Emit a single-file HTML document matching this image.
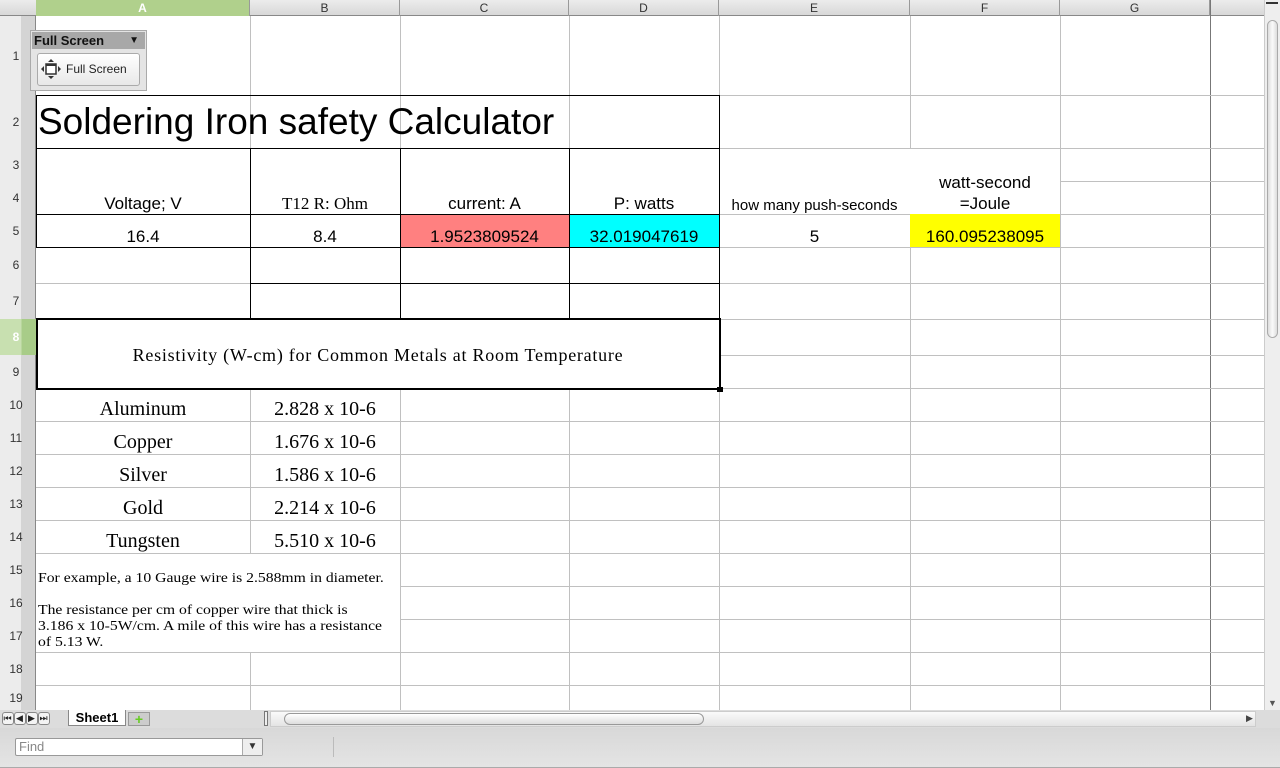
<!DOCTYPE html>
<html><head><meta charset="utf-8"><style>
*{margin:0;padding:0;box-sizing:border-box}
body{width:1280px;height:768px;overflow:hidden;background:#fff;font-family:"Liberation Sans",sans-serif;position:relative}
.a{position:absolute}
.h{position:absolute;height:1px;background:#c0c0c0}
.v{position:absolute;width:1px;background:#c0c0c0}
.t{position:absolute;display:flex;align-items:flex-end;justify-content:center;white-space:nowrap;color:#000}
.ser{font-family:"Liberation Serif",serif}
.rh{position:absolute;left:0;width:36px;font-size:12px;color:#333;display:flex;align-items:center;justify-content:center;padding-right:4px}
.ch{position:absolute;top:0;height:16px;font-size:12px;color:#333;text-align:center;line-height:16px;border-right:1px solid #999}
</style></head><body>
<div class="a" style="left:0;top:0;width:1264px;height:16px;background:linear-gradient(#ececec,#d8d8d8);border-bottom:1px solid #888"></div>
<div class="a" style="left:0;top:16px;width:36px;height:694px;background:linear-gradient(90deg,#ececec 60%,#d4d4d4 60%);border-right:1px solid #888"></div>
<div class="ch" style="left:36px;width:214px;background:#b0d08c;color:#fff;font-weight:bold">A</div>
<div class="ch" style="left:250px;width:150px">B</div>
<div class="ch" style="left:400px;width:169px">C</div>
<div class="ch" style="left:569px;width:150px">D</div>
<div class="ch" style="left:719px;width:191px">E</div>
<div class="ch" style="left:910px;width:150px">F</div>
<div class="ch" style="left:1060px;width:150px">G</div>
<div class="rh" style="top:16px;height:79px">1</div>
<div class="rh" style="top:95px;height:53px">2</div>
<div class="rh" style="top:148px;height:33px">3</div>
<div class="rh" style="top:181px;height:33px">4</div>
<div class="rh" style="top:214px;height:33px">5</div>
<div class="rh" style="top:247px;height:36px">6</div>
<div class="rh" style="top:283px;height:36px">7</div>
<div class="rh" style="top:319px;height:36px;background:linear-gradient(90deg,#c8e0b0 60%,#a8cc88 60%);color:#fff;font-weight:bold">8</div>
<div class="rh" style="top:355px;height:33px">9</div>
<div class="rh" style="top:388px;height:33px">10</div>
<div class="rh" style="top:421px;height:33px">11</div>
<div class="rh" style="top:454px;height:33px">12</div>
<div class="rh" style="top:487px;height:33px">13</div>
<div class="rh" style="top:520px;height:33px">14</div>
<div class="rh" style="top:553px;height:33px">15</div>
<div class="rh" style="top:586px;height:33px">16</div>
<div class="rh" style="top:619px;height:33px">17</div>
<div class="rh" style="top:652px;height:33px">18</div>
<div class="rh" style="top:685px;height:25px">19</div>
<div class="v" style="left:250px;top:16px;height:694px"></div>
<div class="v" style="left:400px;top:16px;height:694px"></div>
<div class="v" style="left:569px;top:16px;height:694px"></div>
<div class="v" style="left:719px;top:16px;height:694px"></div>
<div class="v" style="left:910px;top:16px;height:694px"></div>
<div class="v" style="left:1060px;top:16px;height:694px"></div>
<div class="v" style="left:1210px;top:0;height:710px;background:#777"></div>
<div class="h" style="left:36px;top:95px;width:1228px"></div>
<div class="h" style="left:36px;top:148px;width:1228px"></div>
<div class="h" style="left:36px;top:181px;width:1228px"></div>
<div class="h" style="left:36px;top:214px;width:1228px"></div>
<div class="h" style="left:36px;top:247px;width:1228px"></div>
<div class="h" style="left:36px;top:283px;width:1228px"></div>
<div class="h" style="left:36px;top:319px;width:1228px"></div>
<div class="h" style="left:36px;top:355px;width:1228px"></div>
<div class="h" style="left:36px;top:388px;width:1228px"></div>
<div class="h" style="left:36px;top:421px;width:1228px"></div>
<div class="h" style="left:36px;top:454px;width:1228px"></div>
<div class="h" style="left:36px;top:487px;width:1228px"></div>
<div class="h" style="left:36px;top:520px;width:1228px"></div>
<div class="h" style="left:36px;top:553px;width:1228px"></div>
<div class="h" style="left:400px;top:586px;width:864px"></div>
<div class="h" style="left:400px;top:619px;width:864px"></div>
<div class="h" style="left:36px;top:652px;width:1228px"></div>
<div class="h" style="left:36px;top:685px;width:1228px"></div>
<div class="a" style="left:37px;top:149px;width:682px;height:65px;background:#fff"></div>
<div class="a" style="left:720px;top:149px;width:340px;height:65px;background:#fff"></div>
<div class="a" style="left:37px;top:320px;width:682px;height:68px;background:#fff"></div>
<div class="a" style="left:37px;top:554px;width:363px;height:98px;background:#fff"></div>
<div class="a" style="left:37px;top:16px;width:213px;height:79px;background:#fff"></div>
<div class="a" style="left:400px;top:214px;width:169px;height:33px;background:#ff8080"></div>
<div class="a" style="left:569px;top:214px;width:150px;height:33px;background:#00ffff"></div>
<div class="a" style="left:910px;top:214px;width:150px;height:33px;background:#ffff00"></div>
<div class="a" style="left:36px;top:95px;width:684px;height:54px;border:1px solid #000"></div>
<div class="a" style="left:36px;top:148px;width:684px;height:100px;border:1px solid #000"></div>
<div class="a" style="left:36px;top:214px;width:684px;height:1px;background:#000"></div>
<div class="a" style="left:250px;top:148px;width:1px;height:171px;background:#000"></div>
<div class="a" style="left:400px;top:148px;width:1px;height:171px;background:#000"></div>
<div class="a" style="left:569px;top:148px;width:1px;height:171px;background:#000"></div>
<div class="a" style="left:719px;top:148px;width:1px;height:171px;background:#000"></div>
<div class="a" style="left:250px;top:283px;width:470px;height:1px;background:#000"></div>
<div class="a" style="left:36px;top:318px;width:685px;height:72px;border:2px solid #000"></div>
<div class="a" style="left:717px;top:387px;width:6px;height:5px;background:#000"></div>
<div class="t" style="left:38px;top:95px;width:680px;height:53px;justify-content:flex-start;font-size:37px;padding-bottom:5px">Soldering Iron safety Calculator</div>
<div class="t" style="left:36px;top:148px;width:214px;height:66px;font-size:17px;padding-bottom:0">Voltage; V</div>
<div class="t ser" style="left:250px;top:148px;width:150px;height:66px;font-size:17px;padding-bottom:0">T12 R: Ohm</div>
<div class="t" style="left:400px;top:148px;width:169px;height:66px;font-size:17px;padding-bottom:0">current: A</div>
<div class="t" style="left:569px;top:148px;width:150px;height:66px;font-size:17px;padding-bottom:0">P: watts</div>
<div class="t" style="left:719px;top:148px;width:191px;height:66px;font-size:15px;padding-bottom:0">how many push-seconds</div>
<div class="t" style="left:910px;top:148px;width:150px;height:66px;font-size:17px;line-height:21px;text-align:center;padding-bottom:0">watt-second<br>=Joule</div>
<div class="t" style="left:36px;top:214px;width:214px;height:33px;font-size:17px;padding-bottom:0">16.4</div>
<div class="t" style="left:250px;top:214px;width:150px;height:33px;font-size:17px;padding-bottom:0">8.4</div>
<div class="t" style="left:400px;top:214px;width:169px;height:33px;font-size:17px;padding-bottom:0">1.9523809524</div>
<div class="t" style="left:569px;top:214px;width:150px;height:33px;font-size:17px;padding-bottom:0">32.019047619</div>
<div class="t" style="left:719px;top:214px;width:191px;height:33px;font-size:17px;padding-bottom:0">5</div>
<div class="t" style="left:910px;top:214px;width:150px;height:33px;font-size:17px;padding-bottom:0">160.095238095</div>
<div class="t ser" style="left:36px;top:321px;width:684px;height:69px;align-items:center;font-size:18px;letter-spacing:0.75px">Resistivity (W-cm) for Common Metals at Room Temperature</div>
<div class="t ser" style="left:36px;top:388px;width:214px;height:33px;font-size:20px">Aluminum</div>
<div class="t ser" style="left:250px;top:388px;width:150px;height:33px;font-size:20px">2.828 x 10-6</div>
<div class="t ser" style="left:36px;top:421px;width:214px;height:33px;font-size:20px">Copper</div>
<div class="t ser" style="left:250px;top:421px;width:150px;height:33px;font-size:20px">1.676 x 10-6</div>
<div class="t ser" style="left:36px;top:454px;width:214px;height:33px;font-size:20px">Silver</div>
<div class="t ser" style="left:250px;top:454px;width:150px;height:33px;font-size:20px">1.586 x 10-6</div>
<div class="t ser" style="left:36px;top:487px;width:214px;height:33px;font-size:20px">Gold</div>
<div class="t ser" style="left:250px;top:487px;width:150px;height:33px;font-size:20px">2.214 x 10-6</div>
<div class="t ser" style="left:36px;top:520px;width:214px;height:33px;font-size:20px">Tungsten</div>
<div class="t ser" style="left:250px;top:520px;width:150px;height:33px;font-size:20px">5.510 x 10-6</div>
<div class="a ser" style="left:38px;top:571px;width:360px;font-size:14px;line-height:16px;white-space:nowrap;transform:scaleX(1.12);transform-origin:left top">For example, a 10 Gauge wire is 2.588mm in diameter.<br><br>The resistance per cm of copper wire that thick is<br>3.186 x 10-5W/cm. A mile of this wire has a resistance<br>of 5.13 W.</div>
<div class="a" style="left:30px;top:30px;width:117px;height:61px;background:#e4e4e4;border:1px solid #aaa"></div>
<div class="a" style="left:32px;top:32px;width:113px;height:17px;background:#a8a8a8;font-size:13px;font-weight:bold;color:#111;line-height:17px;padding-left:2px">Full Screen<span style="position:absolute;right:6px;top:0;font-size:10px">▼</span></div>
<div class="a" style="left:37px;top:53px;width:103px;height:33px;background:linear-gradient(#fff,#e8e8e8);border:1px solid #aaa;border-radius:3px;font-size:12px;color:#222;line-height:31px;padding-left:28px">Full Screen</div>
<svg class="a" style="left:40px;top:58px" width="22" height="22" viewBox="0 0 22 22"><rect x="6" y="6" width="10" height="10" fill="#fff" stroke="#333" stroke-width="1.5"/><rect x="6" y="6" width="10" height="2" fill="#333"/><path d="M11 1l-3 3h6zM11 21l-3-3h6zM1 11l3-3v6zM21 11l-3-3v6z" fill="#333"/></svg>
<div class="a" style="left:1264px;top:0;width:16px;height:710px;background:#eee;border-left:1px solid #ccc"></div>
<div class="a" style="left:1266px;top:2px;width:12px;height:2px;background:#333"></div>
<div class="a" style="left:1267px;top:20px;width:11px;height:318px;background:linear-gradient(90deg,#ddd,#fafafa,#ddd);border:1px solid #aaa;border-radius:6px"></div>
<div class="a" style="left:1268px;top:698px;font-size:9px;color:#555">▼</div>
<div class="a" style="left:0;top:710px;width:1280px;height:18px;background:#dcdcdc"></div>
<div class="a" style="left:2px;top:712px;font-size:9px;letter-spacing:1px;color:#222">
<span style="display:inline-block;width:12px;height:13px;border:1px solid #888;border-radius:3px;background:#f4f4f4;text-align:center">⏮</span><span style="display:inline-block;width:12px;height:13px;border:1px solid #888;border-radius:3px;background:#f4f4f4;text-align:center">◀</span><span style="display:inline-block;width:12px;height:13px;border:1px solid #888;border-radius:3px;background:#f4f4f4;text-align:center">▶</span><span style="display:inline-block;width:12px;height:13px;border:1px solid #888;border-radius:3px;background:#f4f4f4;text-align:center">⏭</span></div>
<div class="a" style="left:68px;top:710px;width:58px;height:16px;background:#fff;border:1px solid #888;border-top:none;font-size:13px;font-weight:bold;text-align:center;line-height:15px">Sheet1</div>
<div class="a" style="left:128px;top:712px;width:22px;height:14px;background:#ccc;border:1px solid #999;color:#6c2;font-weight:bold;font-size:14px;line-height:12px;text-align:center">+</div>
<div class="a" style="left:264px;top:711px;width:4px;height:15px;border:1px solid #777;background:#eee"></div>
<div class="a" style="left:270px;top:711px;width:986px;height:16px;background:linear-gradient(#fafafa,#e4e4e4);border:1px solid #ccc"></div>
<div class="a" style="left:284px;top:713px;width:420px;height:12px;background:linear-gradient(#fff,#ddd);border:1px solid #999;border-radius:6px"></div>
<div class="a" style="left:1246px;top:713px;font-size:9px;color:#444">▶</div>
<div class="a" style="left:0;top:728px;width:1280px;height:40px;background:linear-gradient(#d8d8d8,#e4e4e4);border-bottom:1px solid #aaa"></div>
<div class="a" style="left:15px;top:738px;width:248px;height:18px;background:#fff;border:1px solid #999;border-radius:2px;font-size:13px;color:#888;line-height:16px;padding-left:3px">Find</div>
<div class="a" style="left:242px;top:739px;width:20px;height:16px;border-left:1px solid #aaa;background:#eee;font-size:10px;text-align:center;line-height:16px;color:#333">▼</div>
<div class="a" style="left:333px;top:737px;width:1px;height:20px;background:#bbb"></div>
</body></html>
